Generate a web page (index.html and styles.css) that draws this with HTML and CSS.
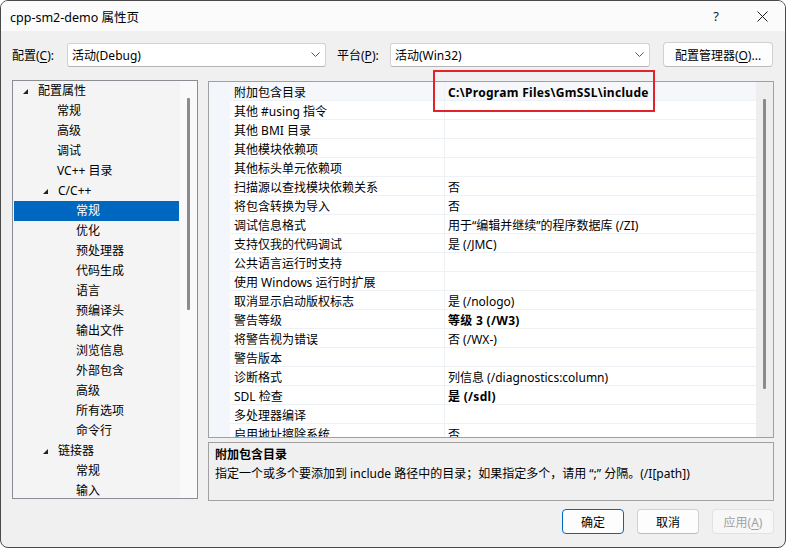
FILE: index.html
```html
<!DOCTYPE html>
<html lang="zh-CN">
<head>
    <meta charset="UTF-8">
    <title>cpp-sm2-demo 属性页</title>
    <link rel="stylesheet" href="styles.css">
</head>
<body>
    <div class="dialog">
        <div class="titlebar">
            <span class="title">cpp-sm2-demo 属性页</span>
            <span class="caption-btn help">?</span>
            <span class="caption-btn close">
                <svg width="11" height="11" viewBox="0 0 11 11"><path d="M0.5 0.5 L10.5 10.5 M10.5 0.5 L0.5 10.5" stroke="#1a1a1a" stroke-width="1"/></svg>
            </span>
        </div>

        <div class="toolbar">
            <span class="label label-config">配置(<u>C</u>):</span>
            <div class="combo combo-config">
                <span>活动(Debug)</span>
                <svg width="9" height="5" viewBox="0 0 9 5"><polyline points="0.5,0.5 4.5,4.5 8.5,0.5" fill="none" stroke="#555" stroke-width="1"/></svg>
            </div>
            <span class="label label-platform">平台(<u>P</u>):</span>
            <div class="combo combo-platform">
                <span>活动(Win32)</span>
                <svg width="9" height="5" viewBox="0 0 9 5"><polyline points="0.5,0.5 4.5,4.5 8.5,0.5" fill="none" stroke="#555" stroke-width="1"/></svg>
            </div>
            <button class="btn btn-manager">配置管理器(<u>O</u>)...</button>
        </div>

        <div class="main">
            <div class="tree">
                <div class="tree-list">
                    <div class="node l1"><span class="twisty"><svg width="5" height="5" viewBox="0 0 5 5"><polygon points="5,0 5,5 0,5" fill="#222"/></svg></span>配置属性</div>
                    <div class="node l2">常规</div>
                    <div class="node l2">高级</div>
                    <div class="node l2">调试</div>
                    <div class="node l2">VC++ 目录</div>
                    <div class="node l2t"><span class="twisty"><svg width="5" height="5" viewBox="0 0 5 5"><polygon points="5,0 5,5 0,5" fill="#222"/></svg></span>C/C++</div>
                    <div class="node l3 selected">常规</div>
                    <div class="node l3">优化</div>
                    <div class="node l3">预处理器</div>
                    <div class="node l3">代码生成</div>
                    <div class="node l3">语言</div>
                    <div class="node l3">预编译头</div>
                    <div class="node l3">输出文件</div>
                    <div class="node l3">浏览信息</div>
                    <div class="node l3">外部包含</div>
                    <div class="node l3">高级</div>
                    <div class="node l3">所有选项</div>
                    <div class="node l3">命令行</div>
                    <div class="node l2t"><span class="twisty"><svg width="5" height="5" viewBox="0 0 5 5"><polygon points="5,0 5,5 0,5" fill="#222"/></svg></span>链接器</div>
                    <div class="node l3">常规</div>
                    <div class="node l3">输入</div>
                </div>
                <div class="scroll tree-scroll"><div class="thumb"></div></div>
            </div>

            <div class="right">
                <div class="grid">
                    <div class="rows">
                        <div class="row current"><span class="gutter"></span><span class="name">附加包含目录</span><span class="value bold">C:\Program Files\GmSSL\include</span></div>
                        <div class="row"><span class="gutter"></span><span class="name">其他 #using 指令</span><span class="value"></span></div>
                        <div class="row"><span class="gutter"></span><span class="name">其他 BMI 目录</span><span class="value"></span></div>
                        <div class="row"><span class="gutter"></span><span class="name">其他模块依赖项</span><span class="value"></span></div>
                        <div class="row"><span class="gutter"></span><span class="name">其他标头单元依赖项</span><span class="value"></span></div>
                        <div class="row"><span class="gutter"></span><span class="name">扫描源以查找模块依赖关系</span><span class="value">否</span></div>
                        <div class="row"><span class="gutter"></span><span class="name">将包含转换为导入</span><span class="value">否</span></div>
                        <div class="row"><span class="gutter"></span><span class="name">调试信息格式</span><span class="value">用于“编辑并继续”的程序数据库 (/ZI)</span></div>
                        <div class="row"><span class="gutter"></span><span class="name">支持仅我的代码调试</span><span class="value">是 (/JMC)</span></div>
                        <div class="row"><span class="gutter"></span><span class="name">公共语言运行时支持</span><span class="value"></span></div>
                        <div class="row"><span class="gutter"></span><span class="name">使用 Windows 运行时扩展</span><span class="value"></span></div>
                        <div class="row"><span class="gutter"></span><span class="name">取消显示启动版权标志</span><span class="value">是 (/nologo)</span></div>
                        <div class="row"><span class="gutter"></span><span class="name">警告等级</span><span class="value bold">等级 3 (/W3)</span></div>
                        <div class="row"><span class="gutter"></span><span class="name">将警告视为错误</span><span class="value">否 (/WX-)</span></div>
                        <div class="row"><span class="gutter"></span><span class="name">警告版本</span><span class="value"></span></div>
                        <div class="row"><span class="gutter"></span><span class="name">诊断格式</span><span class="value">列信息 (/diagnostics:column)</span></div>
                        <div class="row"><span class="gutter"></span><span class="name">SDL 检查</span><span class="value bold">是 (/sdl)</span></div>
                        <div class="row"><span class="gutter"></span><span class="name">多处理器编译</span><span class="value"></span></div>
                        <div class="row"><span class="gutter"></span><span class="name">启用地址擦除系统</span><span class="value">否</span></div>
                    </div>
                    <div class="scroll grid-scroll"><div class="thumb"></div></div>
                </div>

                <div class="desc">
                    <div class="desc-title">附加包含目录</div>
                    <div class="desc-text">指定一个或多个要添加到 include 路径中的目录；如果指定多个，请用 “;” 分隔。(/I[path])</div>
                </div>
            </div>
        </div>

        <div class="buttons">
            <button class="btn btn-ok">确定</button>
            <button class="btn">取消</button>
            <button class="btn btn-disabled">应用(<u>A</u>)</button>
        </div>

        <!-- annotation drawn over the screenshot -->
        <div class="highlight-box"></div>
    </div>
</body>
</html>
```

FILE: styles.css
```css
* {
    box-sizing: border-box;
}
body {
    margin: 0;
    background: #fff;
    font-family: "Noto Sans", "Noto Sans CJK SC", sans-serif;
    font-size: 12px;
    color: #000;
}
u {
    text-decoration: underline;
    text-underline-offset: 2px;
}
.dialog {
    position: relative;
    width: 786px;
    height: 548px;
    border: 1px solid #4a4a4a;
    border-radius: 8px;
    background: #f0f0f0;
    overflow: hidden;
    display: flex;
    flex-direction: column;
}
.titlebar {
    height: 30px;
    flex: none;
    background: #fbfbfb;
    display: flex;
    align-items: center;
    padding-left: 9px;
}
.title {
    flex: 1;
    font-size: 12.5px;
}
.caption-btn {
    width: 46px;
    height: 30px;
    display: flex;
    align-items: center;
    justify-content: center;
    color: #1a1a1a;
}
.caption-btn.help {
    font-size: 13px;
}

/* config / platform bar */
.toolbar {
    flex: none;
    height: 25px;
    margin-top: 11px;
    padding-left: 11px;
    display: flex;
    align-items: center;
}
.label {
    flex: none;
}
.label-config {
    width: 55px;
}
.label-platform {
    width: 53px;
    margin-left: 11px;
}
.combo {
    flex: none;
    height: 24px;
    background: #fff;
    border: 1px solid #d3d3d3;
    border-bottom-color: #b4b4b4;
    border-radius: 3px;
    display: flex;
    align-items: center;
    justify-content: space-between;
    padding: 0 5px 0 4px;
}
.combo-config {
    width: 259px;
}
.combo-platform {
    width: 260px;
}
.btn {
    font-family: inherit;
    font-size: 12px;
    color: #000;
    height: 25px;
    width: 62px;
    background: #fdfdfd;
    border: 1px solid #d0d0d0;
    border-bottom-color: #bcbcbc;
    border-radius: 4px;
    padding: 0;
}
.btn-manager {
    width: 110px;
    margin-left: 13px;
}

/* tree + grid */
.main {
    flex: none;
    height: 421px;
    margin-top: 13px;
    padding: 0 11px;
    display: flex;
    gap: 10px;
}
.tree {
    width: 186px;
    height: 419px;
    border: 1px solid #8a8d93;
    background: #f4f4f4;
    display: flex;
    overflow: hidden;
}
.tree-list {
    flex: 1;
    padding: 0 1px;
}
.node {
    height: 20px;
    line-height: 20px;
    white-space: nowrap;
    display: flex;
    align-items: center;
}
.twisty {
    width: 15px;
    flex: none;
    display: flex;
    align-items: center;
    padding-top: 1px;
}
.l1 {
    padding-left: 9px;
}
.l2 {
    padding-left: 43px;
}
.l2t {
    padding-left: 29px;
}
.l3 {
    padding-left: 62px;
}
.selected {
    background: #0067c0;
    color: #fff;
}
.scroll {
    flex: none;
    width: 17px;
    display: flex;
    justify-content: center;
}
.thumb {
    width: 3px;
    background: #8b8b8b;
    border-radius: 1px;
}
.tree-scroll {
    background: #f9f9f9;
    padding-top: 17px;
}
.tree-scroll .thumb {
    height: 212px;
}
.right {
    width: 566px;
    margin-top: 1px;
    display: flex;
    flex-direction: column;
    gap: 4px;
}
.grid {
    height: 357px;
    border: 1px solid #a0a0a0;
    background: #fff;
    display: flex;
    overflow: hidden;
}
.rows {
    flex: 1;
    overflow: hidden;
}
.row {
    display: grid;
    grid-template-columns: 21px 215px 1fr;
    height: 19px;
    line-height: 18px;
    border-bottom: 1px solid #eef1f6;
    white-space: nowrap;
}
.row > span {
    padding-top: 2px;
}
.gutter {
    background: #f3f6fb;
    margin-bottom: -1px;
}
.name {
    padding-left: 4px;
    border-right: 1px solid #eef1f6;
}
.value {
    padding-left: 3px;
}
.bold {
    font-weight: bold;
}
.value.bold {
    letter-spacing: 0.3px;
}
.row.current {
    background: #f5f7fb;
}
.grid-scroll {
    background: #eeeeee;
    padding-top: 17px;
}
.grid-scroll .thumb {
    height: 290px;
}
.desc {
    height: 59px;
    border: 1px solid #a0a0a0;
    padding: 2px 6px 0;
    line-height: 19px;
}
.desc-title {
    font-weight: bold;
}

/* bottom buttons */
.buttons {
    flex: none;
    margin-top: 8px;
    padding-right: 11px;
    display: flex;
    justify-content: flex-end;
    gap: 13px;
}
.btn-ok {
    border: 1px solid #0067c0;
}
.btn-disabled {
    color: #a2a2a2;
    background: #f7f7f7;
    border-color: #e2e2e2;
}

.highlight-box {
    position: absolute;
    left: 432px;
    top: 69px;
    width: 222px;
    height: 42px;
    border: 2px solid #e3232c;
}
```
